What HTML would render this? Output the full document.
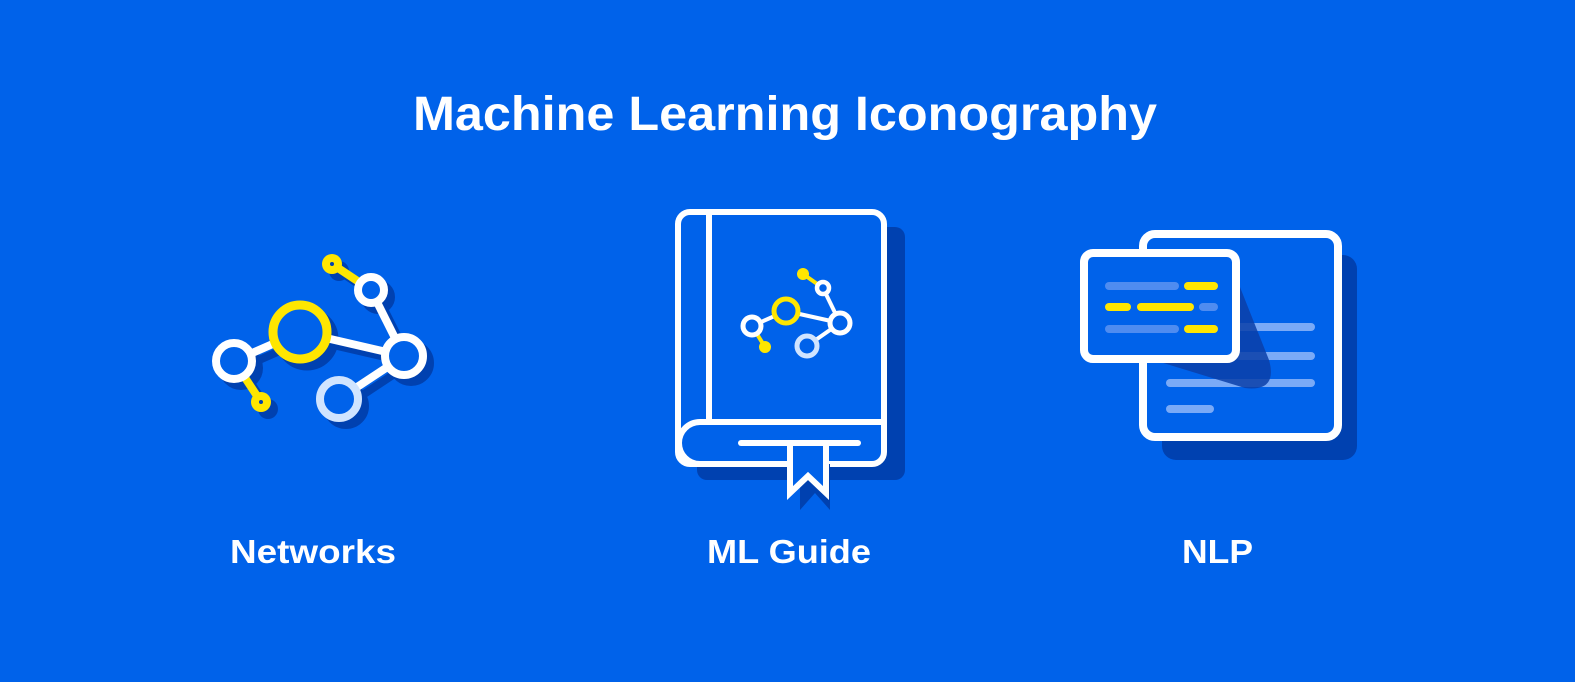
<!DOCTYPE html>
<html><head><meta charset="utf-8"><style>
html,body{margin:0;padding:0;background:#0062EA;}
svg{display:block}
text{font-family:"Liberation Sans",sans-serif;font-weight:bold;fill:#fff}
</style></head><body>
<svg width="1575" height="682" viewBox="0 0 1575 682" xmlns="http://www.w3.org/2000/svg">
<rect width="1575" height="682" fill="#0062EA"/>
<text x="413" y="130" font-size="48" textLength="744" lengthAdjust="spacingAndGlyphs">Machine Learning Iconography</text>
<text x="230" y="563" font-size="33" textLength="166" lengthAdjust="spacingAndGlyphs">Networks</text>
<text x="707" y="563" font-size="33" textLength="164" lengthAdjust="spacingAndGlyphs">ML Guide</text>
<text x="1182" y="563" font-size="33" textLength="71" lengthAdjust="spacingAndGlyphs">NLP</text>

<!-- Networks -->
<g style="filter:drop-shadow(7px 7px 0 #0041B0)">
 <g stroke-width="8" fill="none">
  <line x1="332" y1="264" x2="371" y2="290" stroke="#FFE600"/>
  <line x1="234" y1="361" x2="261" y2="402" stroke="#FFE600"/>
  <line x1="234" y1="361" x2="300" y2="332" stroke="#fff"/>
  <line x1="300" y1="332" x2="404" y2="356" stroke="#fff"/>
  <line x1="371" y1="290" x2="404" y2="356" stroke="#fff"/>
  <line x1="404" y1="356" x2="339" y2="399" stroke="#fff"/>
 </g>
 <circle cx="332" cy="264" r="10" fill="#FFE600"/>
 <circle cx="261" cy="402" r="10" fill="#FFE600"/>
 <circle cx="371" cy="290" r="13" fill="#0062EA" stroke="#fff" stroke-width="8"/>
 <circle cx="300" cy="332" r="27" fill="#0062EA" stroke="#FFE600" stroke-width="9"/>
 <circle cx="234" cy="361" r="18" fill="#0062EA" stroke="#fff" stroke-width="8"/>
 <circle cx="404" cy="356" r="19" fill="#0062EA" stroke="#fff" stroke-width="8"/>
 <circle cx="339" cy="399" r="19" fill="#0062EA" stroke="#D0E4FF" stroke-width="8"/>
</g>
<circle cx="332" cy="264" r="2" fill="#0041B0"/>
<circle cx="261" cy="402" r="2" fill="#0041B0"/>

<!-- Book -->
<rect x="697" y="227" width="208" height="253" rx="10" fill="#0041B0"/>
<rect x="678" y="212" width="206" height="252" rx="12" fill="#0062EA" stroke="#fff" stroke-width="6"/>
<line x1="709" y1="212" x2="709" y2="422" stroke="#fff" stroke-width="6"/>
<path d="M881 422 H700 A21 21 0 0 0 700 464" fill="none" stroke="#fff" stroke-width="6"/>
<line x1="741" y1="443" x2="858" y2="443" stroke="#fff" stroke-width="6" stroke-linecap="round"/>
<path d="M794 447 V502 L808 502" fill="none"/>
<path d="M800 464 V510 L815 493 L830 510 V464 Z" fill="#0041B0"/>
<path d="M790 446 V493 L808 476 L826 493 V446" fill="#0062EA" stroke="#fff" stroke-width="6"/>
<g stroke-width="4" fill="none">
 <line x1="803" y1="274" x2="823" y2="288" stroke="#FFE600"/>
 <line x1="752" y1="326" x2="765" y2="347" stroke="#FFE600"/>
 <line x1="752" y1="326" x2="786" y2="311" stroke="#fff"/>
 <line x1="786" y1="311" x2="840" y2="323" stroke="#fff"/>
 <line x1="823" y1="288" x2="840" y2="323" stroke="#fff"/>
 <line x1="840" y1="323" x2="807" y2="346" stroke="#fff"/>
</g>
<circle cx="803" cy="274" r="6" fill="#FFE600"/>
<circle cx="765" cy="347" r="6" fill="#FFE600"/>
<circle cx="823" cy="288" r="6" fill="#0062EA" stroke="#fff" stroke-width="4.5"/>
<circle cx="786" cy="311" r="12" fill="#0062EA" stroke="#FFE600" stroke-width="5"/>
<circle cx="752" cy="326" r="9" fill="#0062EA" stroke="#fff" stroke-width="5"/>
<circle cx="840" cy="323" r="10" fill="#0062EA" stroke="#fff" stroke-width="5"/>
<circle cx="807" cy="346" r="10" fill="#0062EA" stroke="#D0E4FF" stroke-width="5"/>

<!-- NLP -->
<rect x="1162" y="255" width="195" height="205" rx="14" fill="#0041B0"/>
<rect x="1143" y="234" width="195" height="203" rx="12" fill="#0062EA" stroke="#fff" stroke-width="8"/>
<g stroke="#7AAAF7" stroke-width="8" stroke-linecap="round">
 <line x1="1240" y1="327" x2="1311" y2="327"/>
 <line x1="1240" y1="356" x2="1311" y2="356"/>
 <line x1="1170" y1="383" x2="1311" y2="383"/>
 <line x1="1170" y1="409" x2="1210" y2="409"/>
</g>
<path d="M1230 262 L1269 360 Q1278 392 1245 388 L1160 362 L1230 362 Z" fill="#0A3FA8" opacity="0.85"/>
<rect x="1084" y="253" width="152" height="106" rx="9" fill="#0062EA" stroke="#fff" stroke-width="8"/>
<g stroke-width="8" stroke-linecap="round">
 <line x1="1109" y1="286" x2="1175" y2="286" stroke="#4F8CF0"/>
 <line x1="1188" y1="286" x2="1214" y2="286" stroke="#FFE600"/>
 <line x1="1109" y1="307" x2="1127" y2="307" stroke="#FFE600"/>
 <line x1="1141" y1="307" x2="1190" y2="307" stroke="#FFE600"/>
 <line x1="1203" y1="307" x2="1214" y2="307" stroke="#4F8CF0"/>
 <line x1="1109" y1="329" x2="1175" y2="329" stroke="#4F8CF0"/>
 <line x1="1188" y1="329" x2="1214" y2="329" stroke="#FFE600"/>
</g>
</svg>
</body></html>
